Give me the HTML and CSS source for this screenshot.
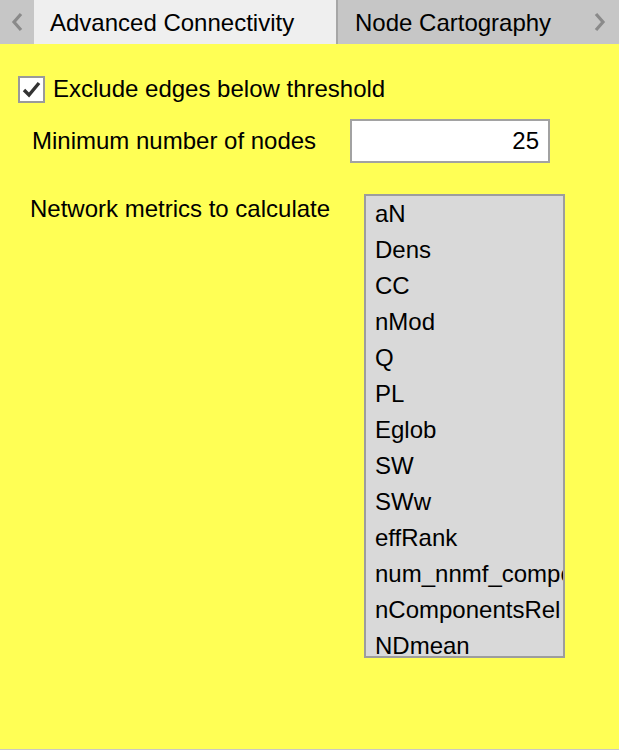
FILE: index.html
```html
<!DOCTYPE html>
<html>
<head>
<meta charset="utf-8">
<link rel="stylesheet" href="styles.css">
</head>
<body>
<div class="app">
  <div class="tabbar">
    <div class="arrow arrow-left">
      <svg width="14" height="22" viewBox="0 0 14 22"><path d="M11 3 L4 11 L11 19" fill="none" stroke="#8a8a8a" stroke-width="3.2"/></svg>
    </div>
    <div class="tab active">Advanced Connectivity</div>
    <div class="tab-sep"></div>
    <div class="tab">Node Cartography</div>
    <div class="arrow arrow-right">
      <svg width="14" height="22" viewBox="0 0 14 22"><path d="M3 3 L10 11 L3 19" fill="none" stroke="#8a8a8a" stroke-width="3.2"/></svg>
    </div>
  </div>
  <div class="content">
    <div class="row check-row">
      <div class="checkbox">
        <svg width="23" height="23" viewBox="0 0 23 23"><path d="M4 12 L9 17 L19 5" fill="none" stroke="#333" stroke-width="3.4"/></svg>
      </div>
      <span class="label">Exclude edges below threshold</span>
    </div>
    <div class="row field-row">
      <span class="label min-label">Minimum number of nodes</span>
      <div class="input">25</div>
    </div>
    <div class="row list-row">
      <span class="label metrics-label">Network metrics to calculate</span>
      <div class="listbox">
        <div class="item">aN</div>
        <div class="item">Dens</div>
        <div class="item">CC</div>
        <div class="item">nMod</div>
        <div class="item">Q</div>
        <div class="item">PL</div>
        <div class="item">Eglob</div>
        <div class="item">SW</div>
        <div class="item">SWw</div>
        <div class="item">effRank</div>
        <div class="item">num_nnmf_components</div>
        <div class="item">nComponentsRel</div>
        <div class="item">NDmean</div>
      </div>
    </div>
  </div>
</div>
</body>
</html>
```
FILE: styles.css
```css
* { box-sizing: border-box; }
html, body { margin: 0; padding: 0; }
body {
  font-family: "Liberation Sans", Arial, Helvetica, sans-serif;
  color: #000;
  background: #ffff55;
}
.app {
  width: 619px;
  height: 750px;
  background: #ffff55;
  border-bottom: 1px solid #c8c8c8;
  display: flex;
  flex-direction: column;
}
.tabbar {
  height: 44px;
  display: flex;
  background: #c6c6c6;
  flex-shrink: 0;
}
.arrow {
  display: flex;
  align-items: center;
  justify-content: center;
  height: 100%;
}
.arrow-left { width: 34px; }
.arrow-right { width: 42px; padding-left: 4px; }
.tab {
  height: 100%;
  display: flex;
  align-items: center;
  font-size: 24px;
  padding-left: 16px;
  padding-top: 1px;
  white-space: nowrap;
}
.tab.active {
  width: 302px;
  background: #efefef;
}
.tab-sep {
  width: 2px;
  background: #a6a6a6;
}
.tab:not(.active) {
  flex: 1;
  padding-left: 17px;
}
.content {
  flex: 1;
  display: flex;
  flex-direction: column;
}
.row { display: flex; }
.label { font-size: 24px; white-space: nowrap; }
.check-row {
  margin-top: 31px;
  padding-left: 18px;
  align-items: center;
  height: 28px;
}
.checkbox {
  width: 27px;
  height: 27px;
  border: 2px solid #9a9a9a;
  background: #fff;
  display: flex;
  align-items: center;
  justify-content: center;
  margin-right: 8px;
}
.field-row {
  margin-top: 16px;
  align-items: center;
  height: 44px;
}
.min-label {
  padding-left: 32px;
  width: 350px;
}
.input {
  width: 200px;
  height: 44px;
  border: 2px solid #a2a2a2;
  background: #fff;
  font-size: 24px;
  text-align: right;
  padding-right: 9px;
  line-height: 40px;
}
.list-row {
  margin-top: 31px;
  align-items: flex-start;
}
.metrics-label {
  padding-left: 30px;
  width: 364px;
  margin-top: 1px;
}
.listbox {
  width: 201px;
  height: 464px;
  border: 2px solid #9d9d9d;
  background: #d9d9d9;
  overflow: hidden;
}
.item {
  font-size: 24px;
  height: 36px;
  line-height: 36px;
  padding-left: 9px;
  white-space: nowrap;
}
```
